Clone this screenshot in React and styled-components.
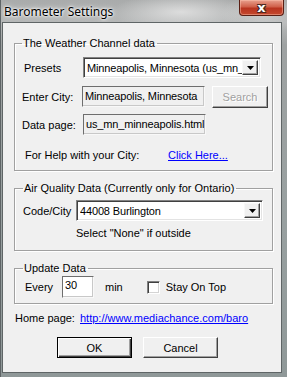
import React from 'react';
import styled, { createGlobalStyle } from 'styled-components';

const Global = createGlobalStyle`
  body {
    margin: 0;
    font-family: "Liberation Sans", Arial, sans-serif;
  }
`;

const Window = styled.div`
  width: 287px;
  height: 377px;
  display: flex;
  flex-direction: column;
  box-sizing: border-box;
  border-left: 1px solid #5e6466;
  background:
    radial-gradient(ellipse 70px 18px at 180px 12px, rgba(235, 235, 235, 0.75), rgba(235, 235, 235, 0) 100%),
    radial-gradient(ellipse 40px 20px at 260px 14px, rgba(220, 220, 220, 0.6), rgba(220, 220, 220, 0) 100%),
    linear-gradient(to bottom, #a9abab 0%, #b6b8b8 6%, #9ea2a2 12%, #98a0a0 60%, #8f9898 100%);
`;

const TitleBar = styled.div`
  height: 22px;
  display: flex;
  align-items: flex-start;
  flex-shrink: 0;
`;

const Title = styled.span`
  margin: 4px 0 0 3px;
  font-family: "Noto Sans", "Open Sans", sans-serif;
  font-size: 12px;
  line-height: 15px;
  color: #000;
  text-shadow: 0 0 6px #fff, 0 0 3px #fff, 0 0 2px #fff;
`;

const CloseButton = styled.div`
  margin-left: auto;
  margin-right: 3px;
  width: 45px;
  height: 16px;
  box-sizing: border-box;
  border: 1px solid #5a1f14;
  border-top: none;
  border-radius: 0 0 4px 4px;
  background: linear-gradient(to bottom, #e8a08e 0%, #d0604a 45%, #b8341f 55%, #c5492f 100%);
  box-shadow: inset 0 0 0 1px rgba(255, 200, 180, 0.45);
  display: flex;
  align-items: center;
  justify-content: center;
  color: #fff;
  font-family: "DejaVu Sans", sans-serif;
  font-weight: bold;
  font-size: 13px;
  line-height: 14px;
  text-shadow: 0 0 1px #402020, 1px 1px 0 #502a20, -1px -1px 0 #502a20, 1px -1px 0 #502a20, -1px 1px 0 #502a20;
`;

const Client = styled.div`
  flex: 1;
  margin: 0 5px 4px 1px;
  background: #f0f0f0;
  border: 1px solid #5f6566;
  display: flex;
  flex-direction: column;
  font-size: 11px;
  color: #000;
`;

const Group = styled.fieldset`
  margin: ${p => p.$top}px 0 0 11px;
  width: 259px;
  box-sizing: border-box;
  padding: ${p => p.$pad};
  border: 1px solid #a0a0a0;
  box-shadow: inset 1px 1px 0 #fff, 1px 1px 0 #fff;
  display: flex;
  flex-direction: column;
  min-width: 0;
`;

const Legend = styled.legend`
  margin-left: 0;
  padding: 0 2px 0 1px;
  font-size: 11px;
  line-height: 14px;
`;

const Row = styled.div`
  display: flex;
  align-items: center;
  height: ${p => p.$h || 21}px;
  margin-top: ${p => p.$mt || 0}px;
`;

const Label = styled.span`
  width: ${p => p.$w}px;
  padding-left: ${p => p.$indent || 0}px;
  box-sizing: border-box;
  flex-shrink: 0;
  font-size: 11px;
  white-space: nowrap;
`;

const Combo = styled.div`
  width: ${p => p.$w}px;
  height: ${p => p.$h}px;
  box-sizing: border-box;
  background: #fff;
  border: 1px solid;
  border-color: #828282 #fff #fff #828282;
  box-shadow: inset 1px 1px 0 #404040, inset -1px -1px 0 #e3e3e3;
  display: flex;
  align-items: center;
  padding: 2px 2px 2px 3px;
`;

const ComboText = styled.span`
  flex: 1;
  overflow: hidden;
  white-space: nowrap;
  font-size: 11px;
  letter-spacing: -0.15px;
`;

const DropButton = styled.div`
  width: 16px;
  height: 100%;
  box-sizing: border-box;
  background: #f0f0f0;
  border: 1px solid;
  border-color: #f8f8f8 #404040 #404040 #f8f8f8;
  box-shadow: inset -1px -1px 0 #a0a0a0;
  display: flex;
  align-items: center;
  justify-content: center;
  flex-shrink: 0;
`;

const Edit = styled.div`
  width: ${p => p.$w}px;
  height: ${p => p.$h || 21}px;
  box-sizing: border-box;
  background: ${p => (p.$white ? '#fff' : '#f0f0f0')};
  border: 1px solid;
  border-color: #6e6e6e #f8f8f8 #f8f8f8 #6e6e6e;
  box-shadow: inset -1px -1px 0 #c8c8c8;
  padding: ${p => (p.$white ? '1px 2px' : '2px 2px')};
  font-size: 11px;
  line-height: 15px;
  letter-spacing: -0.15px;
  white-space: nowrap;
  overflow: hidden;
  flex-shrink: 0;
`;

const PushButton = styled.div`
  width: ${p => p.$w}px;
  height: ${p => p.$h}px;
  margin-left: ${p => p.$ml || 0}px;
  box-sizing: border-box;
  background: #f0f0f0;
  border: 1px solid;
  border-color: ${p => (p.$default ? '#000' : '#fff #404040 #404040 #fff')};
  box-shadow: ${p => (p.$default
    ? 'inset 1px 1px 0 #fff, inset -1px -1px 0 #404040, inset -2px -2px 0 #a0a0a0'
    : 'inset -1px -1px 0 #a0a0a0')};
  display: flex;
  align-items: center;
  justify-content: center;
  font-size: 11px;
  color: ${p => (p.$disabled ? '#a0a0a0' : '#000')};
  text-shadow: ${p => (p.$disabled ? '1px 1px 0 #fff' : 'none')};
  flex-shrink: 0;
`;

const Link = styled.span`
  color: #0000ff;
  text-decoration: underline;
  font-size: 11px;
  white-space: nowrap;
`;

const Text = styled.span`
  font-size: 11px;
  white-space: nowrap;
  margin-left: ${p => p.$ml || 0}px;
`;

const CheckBox = styled.div`
  width: 13px;
  height: 13px;
  box-sizing: border-box;
  background: #fff;
  border: 1px solid;
  border-color: #808080 #fff #fff #808080;
  box-shadow: inset 1px 1px 0 #404040, inset -1px -1px 0 #d4d4d4;
  margin-left: ${p => p.$ml}px;
  flex-shrink: 0;
`;

const Footer = styled.div`
  display: flex;
  align-items: center;
  height: ${p => p.$h}px;
  margin-top: ${p => p.$mt}px;
  padding-left: ${p => p.$pl}px;
  gap: ${p => p.$gap || 0}px;
`;

const Arrow = () => (
  <svg width="7" height="4" viewBox="0 0 7 4">
    <path d="M0 0 H7 L3.5 4 Z" fill="#000" />
  </svg>
);

const Select = ({ w, h, value }) => (
  <Combo $w={w} $h={h}>
    <ComboText>{value}</ComboText>
    <DropButton>
      <Arrow />
    </DropButton>
  </Combo>
);

const App = () => (
  <>
    <Global />
    <Window>
      <TitleBar>
        <Title>Barometer Settings</Title>
        <CloseButton>x</CloseButton>
      </TitleBar>
      <Client>
        <Group $top={13} $pad="7px 6px 5px 7px">
          <Legend>The Weather Channel data</Legend>
          <Row>
            <Label $w={61} $indent={2}>Presets</Label>
            <Select w={178} h={21} value="Minneapolis, Minnesota (us_mn_" />
          </Row>
          <Row $mt={8}>
            <Label $w={60}>Enter City:</Label>
            <Edit $w={123}>Minneapolis, Minnesota</Edit>
            <PushButton $w={56} $h={22} $disabled $ml={7}>Search</PushButton>
          </Row>
          <Row $mt={7}>
            <Label $w={61}>Data page:</Label>
            <Edit $w={123}>us_mn_minneapolis.html</Edit>
          </Row>
          <Row $mt={9}>
            <Label $w={146} $indent={3}>For Help with your City:</Label>
            <Link>Click Here...</Link>
          </Row>
        </Group>

        <Group $top={10} $pad="5px 6px 10px 8px">
          <Legend>Air Quality Data (Currently only for Ontario)</Legend>
          <Row $h={21}>
            <Label $w={53}>Code/City</Label>
            <Select w={187} h={21} value="44008 Burlington" />
          </Row>
          <Row $h={14} $mt={5}>
            <Text $ml={53}>Select "None" if outside</Text>
          </Row>
        </Group>

        <Group $top={10} $pad="1px 6px 5px 8px">
          <Legend>Update Data</Legend>
          <Row $h={22}>
            <Label $w={39} $indent={2}>Every</Label>
            <Edit $w={32} $h={22} $white>30</Edit>
            <Text $ml={11}>min</Text>
            <CheckBox $ml={24} />
            <Text $ml={6}>Stay On Top</Text>
          </Row>
        </Group>

        <Footer $h={14} $mt={7} $pl={12}>
          <Label $w={65}>Home page:</Label>
          <Link>http://www.mediachance.com/baro</Link>
        </Footer>

        <Footer $h={21} $mt={12} $pl={54} $gap={11}>
          <PushButton $w={75} $h={21} $default>OK</PushButton>
          <PushButton $w={75} $h={21}>Cancel</PushButton>
        </Footer>
      </Client>
    </Window>
  </>
);

export default App;
